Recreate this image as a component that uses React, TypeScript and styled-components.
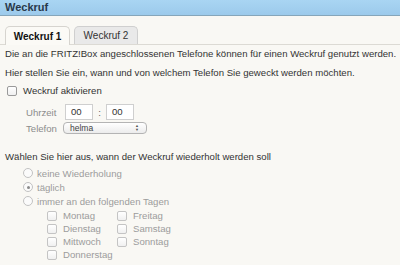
import styled, { createGlobalStyle } from "styled-components";

const GlobalStyle = createGlobalStyle`
  html, body {
    margin: 0;
    padding: 0;
    background: #f9f8f4;
  }
  body {
    font-family: "Liberation Sans", Arial, sans-serif;
    font-size: 9.6px;
    color: #333;
  }
`;

const Page = styled.div`
  width: 400px;
  height: 265px;
  overflow: hidden;
  background: #f9f8f4;
`;

const Header = styled.div`
  height: 15px;
  line-height: 15px;
  padding-left: 5px;
  background: linear-gradient(#a9d5f3, #9ccaeb);
  border-bottom: 1px solid #86a6ba;
  font-size: 11px;
  font-weight: bold;
  color: #29394a;
`;

const TabBar = styled.div`
  display: flex;
  align-items: flex-end;
  gap: 4px;
  padding: 10px 0 0 5px;
  border-bottom: 1px solid #dcdad4;
`;

const Tab = styled.div<{ $active?: boolean }>`
  width: ${(p) => (p.$active ? 65 : 64)}px;
  height: ${(p) => (p.$active ? 19 : 18)}px;
  box-sizing: border-box;
  display: flex;
  align-items: center;
  justify-content: center;
  border: 1px solid ${(p) => (p.$active ? "#d6d4cf" : "#cfcfcf")};
  border-bottom: none;
  border-radius: 5px 5px 0 0;
  background: ${(p) => (p.$active ? "#fbfaf6" : "#e9e9e9")};
  font-size: 10px;
  font-weight: ${(p) => (p.$active ? "bold" : "normal")};
  color: ${(p) => (p.$active ? "#111" : "#333")};
  margin-bottom: ${(p) => (p.$active ? -1 : 0)}px;
`;

const Content = styled.div`
  padding: 2px 5px 0 5px;
  display: flex;
  flex-direction: column;
  line-height: 13px;
`;

const Para = styled.div<{ $top?: number }>`
  margin-top: ${(p) => p.$top ?? 0}px;
  white-space: nowrap;
`;

const CheckRow = styled.label<{ $indent?: number; $top?: number; $disabled?: boolean }>`
  display: flex;
  align-items: center;
  gap: 6px;
  height: 13px;
  margin-top: ${(p) => p.$top ?? 0}px;
  padding-left: ${(p) => p.$indent ?? 0}px;
  color: ${(p) => (p.$disabled ? "#9c9c9c" : "#333")};
  white-space: nowrap;
`;

const Box = styled.span<{ $disabled?: boolean }>`
  width: 8px;
  height: 8px;
  flex: none;
  border: 1px solid ${(p) => (p.$disabled ? "#c4c4c4" : "#9a9a9a")};
  border-radius: 2px;
  background: linear-gradient(#ffffff, #f0f0f0);
`;

const Radio = styled.span<{ $checked?: boolean }>`
  width: 8px;
  height: 8px;
  flex: none;
  border: 1px solid #c2c2c2;
  border-radius: 50%;
  background: #fbfbfb;
  display: flex;
  align-items: center;
  justify-content: center;
  &::after {
    content: "";
    display: ${(p) => (p.$checked ? "block" : "none")};
    width: 3px;
    height: 3px;
    border-radius: 50%;
    background: #8a8a8a;
  }
`;

const FormRow = styled.div<{ $top?: number }>`
  display: flex;
  align-items: center;
  height: 16px;
  margin-top: ${(p) => p.$top ?? 0}px;
  padding-left: 21px;
`;

const FieldLabel = styled.span`
  width: 39px;
  color: #8c8c8c;
`;

const TimeInput = styled.div`
  width: 28px;
  height: 16px;
  box-sizing: border-box;
  border: 1px solid #cfcfcf;
  background: #fff;
  padding-left: 5px;
  line-height: 14px;
  color: #333;
`;

const Colon = styled.span`
  width: 13px;
  text-align: center;
  color: #666;
`;

const Select = styled.div`
  width: 84px;
  height: 12px;
  box-sizing: border-box;
  margin-left: -2px;
  border: 1px solid #b4b4b4;
  border-radius: 4px;
  background: linear-gradient(#ffffff, #ececec);
  display: flex;
  align-items: center;
  justify-content: space-between;
  padding: 0 7px 0 6px;
  font-size: 8.5px;
  line-height: 10px;
  color: #444;
`;

const Arrows = styled.span`
  display: flex;
  flex-direction: column;
  font-size: 4px;
  line-height: 4px;
  color: #555;
`;

const RadioList = styled.div`
  display: flex;
  flex-direction: column;
  margin-top: 3px;
`;

const RadioRow = styled.div`
  display: flex;
  align-items: center;
  gap: 4px;
  height: 14px;
  padding-left: 18px;
  color: #9c9c9c;
  white-space: nowrap;
`;

const DayGrid = styled.div`
  display: grid;
  grid-template-columns: 70px 70px;
  grid-auto-rows: 13px;
  margin-top: 1px;
  padding-left: 42px;
  width: max-content;
`;

const days: [string, number, number][] = [
  ["Montag", 1, 1],
  ["Dienstag", 1, 2],
  ["Mittwoch", 1, 3],
  ["Donnerstag", 1, 4],
  ["Freitag", 2, 1],
  ["Samstag", 2, 2],
  ["Sonntag", 2, 3],
];

const DayCell = styled(CheckRow)<{ $col: number; $row: number }>`
  grid-column: ${(p) => p.$col};
  grid-row: ${(p) => p.$row};
`;

export default function App() {
  return (
    <Page>
      <GlobalStyle />
      <Header>Weckruf</Header>
      <TabBar>
        <Tab $active>Weckruf 1</Tab>
        <Tab>Weckruf 2</Tab>
      </TabBar>
      <Content>
        <Para>
          Die an die FRITZ!Box angeschlossenen Telefone können für einen Weckruf genutzt werden.
        </Para>
        <Para $top={6}>
          Hier stellen Sie ein, wann und von welchem Telefon Sie geweckt werden möchten.
        </Para>
        <CheckRow $top={5} $indent={2}>
          <Box />
          Weckruf aktivieren
        </CheckRow>
        <FormRow $top={7}>
          <FieldLabel>Uhrzeit</FieldLabel>
          <TimeInput>00</TimeInput>
          <Colon>:</Colon>
          <TimeInput>00</TimeInput>
        </FormRow>
        <FormRow>
          <FieldLabel>Telefon</FieldLabel>
          <Select>
            helma
            <Arrows>
              <span>▲</span>
              <span>▼</span>
            </Arrows>
          </Select>
        </FormRow>
        <Para $top={14}>Wählen Sie hier aus, wann der Weckruf wiederholt werden soll</Para>
        <RadioList>
          <RadioRow>
            <Radio />
            keine Wiederholung
          </RadioRow>
          <RadioRow>
            <Radio $checked />
            täglich
          </RadioRow>
          <RadioRow>
            <Radio />
            immer an den folgenden Tagen
          </RadioRow>
        </RadioList>
        <DayGrid>
          {days.map(([name, col, row]) => (
            <DayCell key={name} $col={col} $row={row} $disabled>
              <Box $disabled />
              {name}
            </DayCell>
          ))}
        </DayGrid>
      </Content>
    </Page>
  );
}
